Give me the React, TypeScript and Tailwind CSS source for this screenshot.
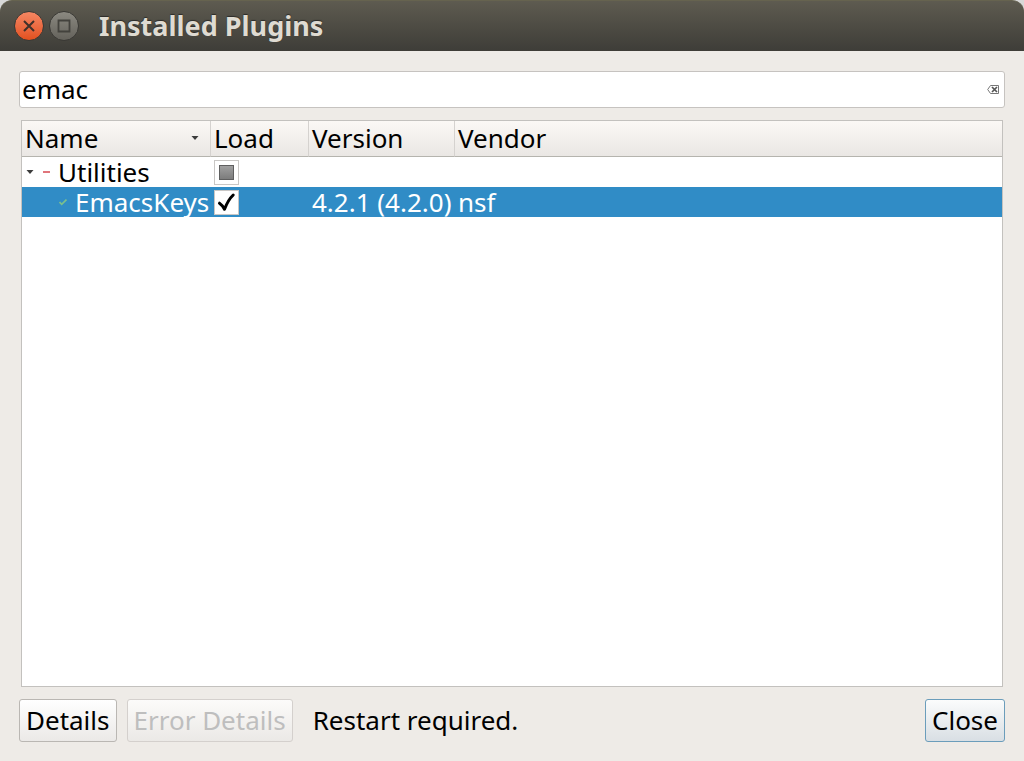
import { useEffect, useRef, useState } from "react";
import type { ReactNode } from "react";

// ─── Types ────────────────────────────────────────────────────────────────────

interface LoadCheckboxProps {
    label: string;
    state: "checked" | "unchecked" | "partial";
    onChange: () => void;
}

interface DialogButtonProps {
    children: ReactNode;
    disabled?: boolean;
    primary?: boolean;
}

// ─── Title bar ────────────────────────────────────────────────────────────────

function TitleBar() {
    return (
        <header className="bg-[#d8d8d8]">
            <div className="flex h-[51px] items-center rounded-t-[12px] border-t border-[#66634f] bg-linear-to-b from-[#5e5b50] to-[#3e3d38] pl-3.5">
                <button
                    type="button"
                    aria-label="Close window"
                    className="flex size-[30px] items-center justify-center rounded-full border border-[#3a3935] bg-linear-to-b from-[#f58662] to-[#e2501c]"
                >
                    <svg viewBox="0 0 12 12" className="size-3" fill="none" stroke="#40302a" strokeWidth="2">
                        <path d="M1 1l10 10M11 1L1 11" />
                    </svg>
                </button>
                <button
                    type="button"
                    aria-label="Maximize window"
                    className="ml-[5px] flex size-[30px] items-center justify-center rounded-full border border-[#3a3935] bg-linear-to-b from-[#8b8981] to-[#64625b]"
                >
                    <svg viewBox="0 0 14 14" className="size-3.5" fill="none" stroke="#43423d" strokeWidth="1.8">
                        <path d="M1.5 1.5h11v11h-11z" />
                    </svg>
                </button>
                <h1 className="ml-5 text-[27px] leading-8 font-bold text-[#dfdbd2] [text-shadow:0_-1px_1px_#2c2b28]">
                    Installed Plugins
                </h1>
            </div>
        </header>
    );
}

// ─── Controls ─────────────────────────────────────────────────────────────────

function LoadCheckbox({ label, state, onChange }: LoadCheckboxProps) {
    const ref = useRef<HTMLInputElement>(null);

    useEffect(() => {
        if (ref.current) ref.current.indeterminate = state === "partial";
    }, [state]);

    return (
        <label className="grid size-[25px] place-items-center">
            <input
                ref={ref}
                type="checkbox"
                aria-label={label}
                checked={state === "checked"}
                onChange={onChange}
                className="col-start-1 row-start-1 size-[25px] appearance-none border border-[#c9c7c5] bg-white"
            />
            {state === "partial" && (
                <span className="pointer-events-none col-start-1 row-start-1 size-[15px] border border-[#5f5f5f] bg-linear-to-b from-[#a0a0a0] to-[#7c7c7c]" />
            )}
            {state === "checked" && (
                <svg
                    viewBox="0 0 25 25"
                    className="pointer-events-none col-start-1 row-start-1 size-[25px]"
                    fill="none"
                    stroke="#000"
                    strokeWidth="3"
                    strokeLinecap="round"
                    strokeLinejoin="round"
                >
                    <path d="M5.500 13.200C7.500 14.500 9 16.500 10.500 19.300C12.500 14 15.500 8.500 19.200 5" />
                </svg>
            )}
        </label>
    );
}

function DialogButton({ children, disabled, primary }: DialogButtonProps) {
    const look = primary
        ? "border-[#6b9dbb] from-[#fbfcfc] to-[#d9dfe4] text-black"
        : disabled
            ? "border-[#d4d0cd] from-[#fcfbfa] to-[#ebe9e6] text-[#bebebe]"
            : "border-[#bab7b3] from-[#ffffff] to-[#ebe9e7] text-black";

    return (
        <button
            type="button"
            disabled={disabled}
            className={`h-[43px] rounded-[3px] border bg-linear-to-b px-1.5 pb-0.5 whitespace-nowrap ${look}`}
        >
            {children}
        </button>
    );
}

function DownArrow() {
    return (
        <svg viewBox="0 0 8 4" className="h-1 w-2 shrink-0" fill="#3c3c3c">
            <path d="M0.500 0h7L4 4z" />
        </svg>
    );
}

// ─── Plugin tree ──────────────────────────────────────────────────────────────

function PluginTable() {
    const [loaded, setLoaded] = useState(true);
    const [group, setGroup] = useState<LoadCheckboxProps["state"]>("partial");
    const th = "h-9 border-b border-[#b5b4ae] bg-linear-to-b from-[#fbf8f5] to-[#eae7e4] p-0 pb-0.5 pl-[3px] text-left font-normal";

    return (
        <div className="mx-0.5 mt-3 flex-1 border border-[#c3c1be] bg-white">
            <table className="w-full table-fixed border-separate border-spacing-0">
                <colgroup>
                    <col className="w-[189px]" />
                    <col className="w-[98px]" />
                    <col className="w-[146px]" />
                    <col />
                </colgroup>
                <thead>
                    <tr>
                        <th className={`${th} border-r border-r-[#d5d2cf]`}>
                            <div className="flex items-center justify-between pr-[11px]">
                                Name
                                <DownArrow />
                            </div>
                        </th>
                        <th className={`${th} border-r border-r-[#d5d2cf]`}>Load</th>
                        <th className={`${th} border-r border-r-[#d5d2cf]`}>Version</th>
                        <th className={th}>Vendor</th>
                    </tr>
                </thead>
                <tbody>
                    <tr>
                        <td className="h-[30px] p-0">
                            <div className="flex items-center pl-1">
                                <button type="button" aria-label="Collapse Utilities" className="flex h-4 items-center">
                                    <DownArrow />
                                </button>
                                <span className="ml-[9px] h-0.5 w-[7px] bg-[#e0757b]" />
                                <span className="ml-2">Utilities</span>
                            </div>
                        </td>
                        <td className="p-0 pl-[3px]">
                            <LoadCheckbox
                                label="Load Utilities"
                                state={group}
                                onChange={() => setGroup(group === "checked" ? "unchecked" : "checked")}
                            />
                        </td>
                        <td className="p-0" />
                        <td className="p-0" />
                    </tr>
                    <tr className="bg-[#308cc6] text-white">
                        <td className="h-[30px] p-0">
                            <div className="flex items-center pl-[37px]">
                                <svg
                                    viewBox="0 0 8 8"
                                    className="size-2 shrink-0"
                                    fill="none"
                                    stroke="#7cc08c"
                                    strokeWidth="1.7"
                                >
                                    <path d="M0.500 4l2.200 2.300L7.500 1.500" />
                                </svg>
                                <span className="ml-2">EmacsKeys</span>
                            </div>
                        </td>
                        <td className="p-0 pl-[3px]">
                            <LoadCheckbox
                                label="Load EmacsKeys"
                                state={loaded ? "checked" : "unchecked"}
                                onChange={() => setLoaded(!loaded)}
                            />
                        </td>
                        <td className="p-0 pl-[3px] whitespace-nowrap">4.2.1 (4.2.0)</td>
                        <td className="p-0 pl-[3px]">nsf</td>
                    </tr>
                </tbody>
            </table>
        </div>
    );
}

// ─── Dialog ───────────────────────────────────────────────────────────────────

export default function App() {
    const [filter, setFilter] = useState("emac");

    return (
        <div className="flex min-h-screen flex-col bg-[#eeebe7] font-['Noto_Sans',sans-serif] text-[26px] leading-[30px] text-black">
            <TitleBar />
            <main className="flex flex-1 flex-col px-[19px] pt-5 pb-[19px]">
                <div className="flex h-[37px] items-center rounded-[3px] border border-[#c6c3c0] bg-white pr-[5px]">
                    <input
                        type="text"
                        aria-label="Filter plugins"
                        value={filter}
                        onChange={(e) => setFilter(e.target.value)}
                        className="min-w-0 flex-1 bg-transparent pb-0.5 pl-0.5 outline-none"
                    />
                    <button type="button" aria-label="Clear filter" onClick={() => setFilter("")}>
                        <svg viewBox="0 0 12 9" className="h-[9px] w-3" fill="none" stroke="#777">
                            <path d="M3.500 0.500H11.500V8.500H3.500L0.700 4.500Z" />
                            <path d="M5 2l5 5M10 2L5 7" stroke="#555" strokeWidth="1.700" />
                        </svg>
                    </button>
                </div>

                <PluginTable />

                <footer className="mt-3 flex items-center">
                    <DialogButton>Details</DialogButton>
                    <div className="ml-2.5 flex">
                        <DialogButton disabled>Error Details</DialogButton>
                    </div>
                    <p className="ml-5 pb-0.5">Restart required.</p>
                    <div className="ml-auto flex">
                        <DialogButton primary>Close</DialogButton>
                    </div>
                </footer>
            </main>
        </div>
    );
}
